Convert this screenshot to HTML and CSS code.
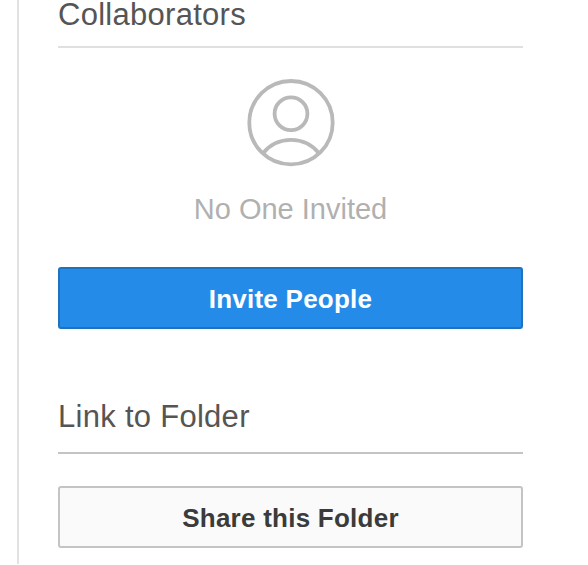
FILE: index.html
```html
<!DOCTYPE html>
<html lang="en">
<head>
<meta charset="utf-8">
<title>Folder sharing</title>
<link rel="stylesheet" href="styles.css">
</head>
<body>
<aside class="sidebar">
  <section class="collaborators">
    <h2 class="heading">Collaborators</h2>
    <div class="empty">
      <svg class="avatar" viewBox="0 0 90 90" aria-hidden="true">
        <circle cx="45" cy="44.7" r="41.7"/>
        <circle cx="45" cy="35.8" r="16.4"/>
        <path d="M17 75.3A36 36 0 0 1 73 75.3"/>
      </svg>
      <p class="message">No One Invited</p>
    </div>
    <button class="button primary">Invite People</button>
  </section>
  <section class="link">
    <h2 class="heading strong">Link to Folder</h2>
    <button class="button secondary">Share this Folder</button>
  </section>
</aside>
</body>
</html>
```

FILE: styles.css
```css
* { box-sizing: border-box; }
body {
  margin: 0;
  background: #fff;
  font-family: "Liberation Sans", Arial, sans-serif;
}
.sidebar {
  height: 564px;
  margin-left: 17px;
  padding: 0 65px 0 39px;
  border-left: 2px solid #e2e2e2;
}
.heading {
  margin: 0;
  height: 48px;
  border-bottom: 2px solid #e0e0e0;
  color: #555;
  font-size: 31px;
  font-weight: 400;
  letter-spacing: 0.28px;
  line-height: 30px;
  white-space: nowrap;
}
.empty {
  display: flex;
  flex-direction: column;
  align-items: center;
  padding-top: 30px;
}
.avatar {
  width: 90px;
  height: 90px;
  margin-left: 1px;
  fill: none;
  stroke: #b9b9b9;
  stroke-width: 3.8;
}
.message {
  margin: 24px 0 0;
  color: #b0b0b0;
  font-size: 29px;
  line-height: 34px;
  white-space: nowrap;
}
.button {
  display: block;
  width: 465px;
  height: 62px;
  padding: 2px 0 0;
  border: 2px solid;
  border-radius: 3px;
  font: bold 26px/56px "Liberation Sans", Arial, sans-serif;
  letter-spacing: 0.25px;
}
.primary {
  margin-top: 41px;
  border-color: #1e73be;
  background: #248ce8;
  color: #fff;
}
.link { margin-top: 72px; }
.strong {
  height: 53px;
  padding-top: 1px;
  border-color: #c4c4c4;
  line-height: 30px;
}
.secondary {
  margin-top: 32px;
  border-color: #c4c4c4;
  background: #fafafa;
  color: #3b3b3b;
}
```
